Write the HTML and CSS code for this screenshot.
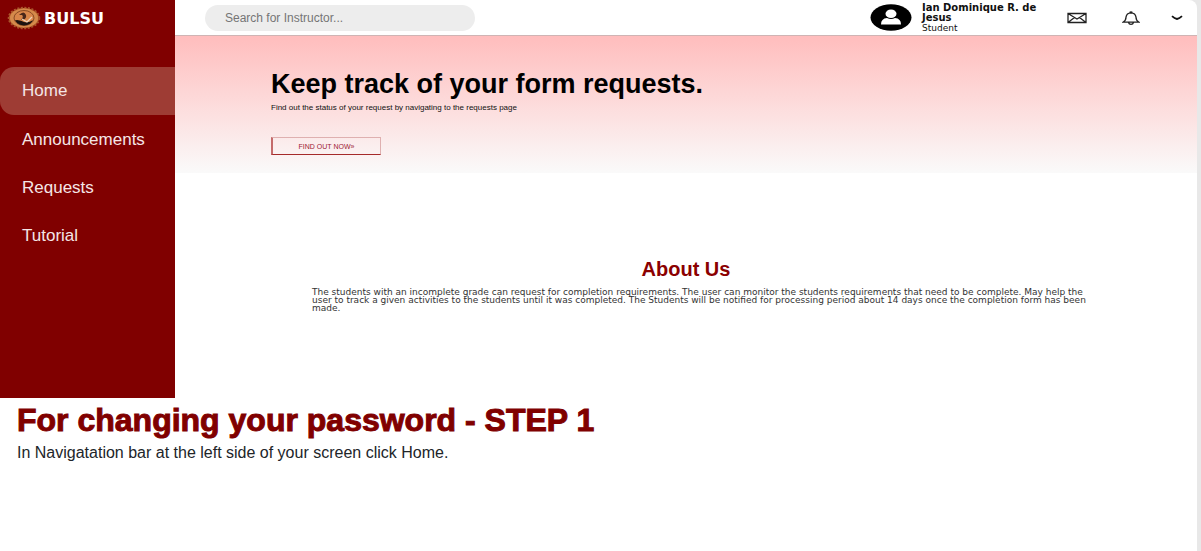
FILE: index.html
```html
<!DOCTYPE html>
<html lang="en">
<head>
<meta charset="utf-8">
<title>BULSU - Tutorial</title>
<link rel="stylesheet" href="styles.css">
</head>
<body>
<div class="page">
  <div class="app">
    <aside class="sidebar">
      <div class="brand">
        <svg class="seal" viewBox="0 0 34 24" aria-hidden="true">
          <ellipse cx="17" cy="12" rx="15" ry="10" fill="#bf6c32" stroke="#a9542a" stroke-width="2.5" stroke-dasharray="2 1.5"/>
          <ellipse cx="17" cy="12" rx="14" ry="9.500" fill="#d58a4b"/>
          <ellipse cx="17" cy="12" rx="10" ry="7.500" fill="#d9864a" stroke="#8a4a24"/>
          <path d="M8 14q6 0 9 2 5 1 9-2-2 5-9 5.500q-7-.5-9-5.500z" fill="#1c1310"/>
          <path d="M12 9q5-5 7 0 1 5-5 5 3-3 1-5z" fill="#49261a"/>
          <path d="M15 13l5 3 5-5" fill="none" stroke="#ecd2ba" stroke-width="1.300"/>
        </svg>
        <span>BULSU</span>
      </div>
      <nav class="nav">
        <a class="nav-link active" href="#home">Home</a>
        <a class="nav-link" href="#announcements">Announcements</a>
        <a class="nav-link" href="#requests">Requests</a>
        <a class="nav-link" href="#tutorial">Tutorial</a>
      </nav>
    </aside>
    <main class="main">
      <header class="topbar">
        <input class="search" type="search" placeholder="Search for Instructor..." aria-label="Search for Instructor">
        <div class="account">
          <svg class="avatar" viewBox="0 0 42 27" aria-hidden="true">
            <ellipse cx="21" cy="13.500" rx="20.500" ry="13.200" fill="#000"/>
            <ellipse cx="21" cy="9.800" rx="5.500" ry="4.300" fill="#fff"/>
            <path d="M11 20.500q0-6 6-6.500 4 2 8 0 6 .5 6 6.500z" fill="#fff"/>
          </svg>
          <div class="who">
            <strong>Ian Dominique R. de<br>Jesus</strong>
            <span>Student</span>
          </div>
          <button class="icon-button" type="button" aria-label="Messages">
            <svg width="20" height="12" viewBox="0 0 20 12" fill="none" stroke="#222" stroke-width="1.300"><path d="M1 1.500h18v9H1zM1 1.500l9 5.500 9-5.500M1 10.500l6.500-5M19 10.500l-6.500-5"/></svg>
          </button>
          <button class="icon-button" type="button" aria-label="Notifications">
            <svg width="18" height="14" viewBox="0 0 18 14" fill="none" stroke="#222" stroke-width="1.300"><path d="M1 11.200q3-1.700 3-5Q4.500 2 9 1.800 13.500 2 14 6.200q0 3.300 3 5zM7.500 1.500q1.500-1.200 3 0M6.500 11.500q.5 1.800 2.500 1.800t2.500-1.800"/></svg>
          </button>
          <button class="icon-button" type="button" aria-label="Account menu">
            <svg width="12" height="6" viewBox="0 0 12 6" fill="none" stroke="#111" stroke-width="1.800"><path d="M1 1.200q2.500 2.300 5 2.800 2.500-.5 5-2.800"/></svg>
          </button>
        </div>
      </header>
      <section class="hero">
        <h1>Keep track of your form requests.</h1>
        <p>Find out the status of your request by navigating to the requests page</p>
        <button class="find" type="button">FIND OUT NOW»</button>
      </section>
      <section class="about">
        <h2>About Us</h2>
        <p>The students with an incomplete grade can request for completion requirements. The user can monitor the students requirements that need to be complete. May help the<br>user to track a given activities to the students until it was completed. The Students will be notified for processing period about 14 days once the completion form has been<br>made.</p>
      </section>
    </main>
  </div>
  <section class="step">
    <h2>For changing your password - STEP 1</h2>
    <p>In Navigatation bar at the left side of your screen click Home.</p>
  </section>
</div>
</body>
</html>
```
FILE: styles.css
```css
* { box-sizing: border-box; }
body {
  margin: 0;
  padding-right: 4px;
  background: #e8e8e8;
  font-family: "Liberation Sans", Arial, sans-serif;
}
h1, h2, p { margin: 0; }
.page {
  min-height: 100vh;
  background: #fff;
  border-top-right-radius: 8px;
}
.app { display: flex; }
.sidebar {
  flex: 0 0 175px;
  min-height: 398px;
  background: #800000;
}
.brand {
  display: flex;
  align-items: center;
  gap: 3px;
  height: 36px;
  padding-left: 7px;
  color: #fff;
  font-family: "DejaVu Sans", sans-serif;
  font-size: 16px;
  font-weight: bold;
}
.seal { width: 34px; height: 24px; }
.nav { padding-top: 31px; }
.nav-link {
  display: block;
  padding-left: 22px;
  border-radius: 14px 0 0 14px;
  color: #f5e6e6;
  font-size: 17px;
  line-height: 48px;
  text-decoration: none;
}
.nav-link.active { margin-bottom: 1px; background: #9e3c34; }
.main { flex: 1; min-width: 0; }
.topbar {
  display: flex;
  align-items: center;
  justify-content: space-between;
  height: 36px;
  padding: 0 13px 0 30px;
  border-bottom: 1px solid #cfb4b4;
}
.search {
  width: 270px;
  height: 26px;
  padding: 0 20px;
  border: 0;
  border-radius: 13px;
  background: #ededed;
  font-family: inherit;
  font-size: 12px;
}
.search::placeholder { color: #757575; }
.account { display: flex; align-items: center; }
.avatar { width: 42px; height: 27px; margin-right: 10px; }
.who {
  width: 134px;
  color: #111;
  font-family: "DejaVu Sans", sans-serif;
  font-size: 10px;
  line-height: 10px;
  white-space: nowrap;
}
.who span { display: block; font-size: 9px; }
.icon-button {
  display: flex;
  align-items: center;
  justify-content: center;
  width: 42px;
  height: 24px;
  padding: 0;
  border: 0;
  background: none;
}
.icon-button + .icon-button { margin-left: 12px; }
.icon-button:last-child { width: 14px; margin-left: 18px; }
.hero {
  min-height: 137px;
  padding: 35px 96px 18px;
  background: linear-gradient(#ffbdbd, #fafafa);
}
.hero h1 { color: #000; font-size: 27px; line-height: 26px; }
.hero p { margin-top: 6px; color: #111; font-size: 8px; line-height: 10px; }
.find {
  width: 110px;
  height: 18px;
  margin-top: 24px;
  padding: 0;
  border: 1px solid #dfb0b0;
  border-bottom-color: #a52a2a;
  border-left: 2px solid #c46b6b;
  background: transparent;
  color: #a02035;
  font-family: inherit;
  font-size: 7px;
}
.about { padding: 87px 110px 0 137px; }
.about h2 {
  padding-right: 27px;
  color: #8b0000;
  font-size: 20px;
  line-height: 18px;
  text-align: center;
}
.about p {
  margin-top: 10px;
  color: #333;
  font-family: "DejaVu Sans", sans-serif;
  font-size: 9px;
  line-height: 8px;
  white-space: nowrap;
}
.step { padding: 4px 17px; }
.step h2 {
  color: #800000;
  font-size: 32px;
  line-height: 36px;
  -webkit-text-stroke: 1px #800000;
}
.step p { margin-top: 6px; color: #212529; font-size: 16px; line-height: 18px; }
```
